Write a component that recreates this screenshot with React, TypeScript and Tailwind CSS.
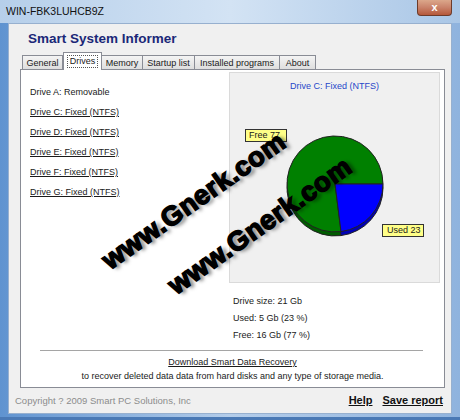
import React from "react";

const font = { fontFamily: '"Liberation Sans", Arial, sans-serif' };

function Pie() {
  const cx = 105;
  const cy = 111;
  const r = 48;
  const ex = 111.0;
  const ey = 158.6;
  const d = 4;
  return (
    <svg width="211" height="211" className="absolute left-0 top-0" viewBox="0 0 211 211">
      <path d={`M${cx},${cy + d} L${ex},${ey + d} A${r},${r} 0 1,1 ${cx + r},${cy + d} Z`} fill="#005c00" stroke="#222" strokeWidth="1" />
      <path d={`M${cx},${cy + d} L${cx + r},${cy + d} A${r},${r} 0 0,1 ${ex},${ey + d} Z`} fill="#0000b4" stroke="#222" strokeWidth="1" />
      <path d={`M${cx},${cy} L${ex},${ey} A${r},${r} 0 1,1 ${cx + r},${cy} Z`} fill="#008000" stroke="#222" strokeWidth="1" />
      <path d={`M${cx},${cy} L${cx + r},${cy} A${r},${r} 0 0,1 ${ex},${ey} Z`} fill="#0000ff" stroke="#222" strokeWidth="1" />
    </svg>
  );
}

function Watermark({ x, y }: { x: number; y: number }) {
  return (
    <div
      className="absolute whitespace-nowrap text-[27px] font-bold leading-none text-black pointer-events-none"
      style={{
        left: x,
        top: y,
        transform: "translate(-50%, -50%) rotate(-35deg)",
        textShadow: "3px 3px 4px rgba(0,0,0,0.5)",
        WebkitTextStroke: "1.5px #000",
        letterSpacing: "0.5px",
        fontFamily: '"Liberation Sans", Arial, sans-serif',
      }}
    >
      www.Gnerk.com
    </div>
  );
}

const tabs = [
  { label: "General", w: "w-[41px]" },
  { label: "Drives", w: "w-[39px]", active: true },
  { label: "Memory", w: "w-[42px]" },
  { label: "Startup list", w: "w-[53px]" },
  { label: "Installed programs", w: "w-[86px]" },
  { label: "About", w: "w-[37px]" },
];

export default function App() {
  return (
    <div
      className="relative w-[460px] h-[420px] overflow-hidden bg-gradient-to-r from-[#5f93d0] via-[#b4cdea] to-[#8fb3de] text-[9px] text-[#1a1a1a] border-b-[3px] border-[#4a79b5]"
      style={font}
    >
      {/* title bar */}
      <div className="h-[23px] flex items-start justify-between bg-gradient-to-r from-[#b6cfea] via-[#d3e3f4] to-[#a9c6e6]">
        <div className="pl-[6px] pt-[5px] text-[10.5px] leading-[12px] text-[#111]">WIN-FBK3LUHCB9Z</div>
        <div className="mr-[8px] w-[35px] h-[16px] rounded-b-[4px] border border-t-0 border-[#6d3b2a] bg-gradient-to-b from-[#dba78b] via-[#c9826a] to-[#b5583a] flex items-center justify-center text-white text-[11px] font-bold leading-none">
          x
        </div>
      </div>

      {/* client area */}
      <div className="mx-[8px] h-[391px] bg-[#f0f0f0] border border-[#97b0cf] flex flex-col">
        <div className="pl-[19px] pt-[7px] h-[28px] text-[13.5px] font-bold leading-[16px] text-[#1b2878]">
          Smart System Informer
        </div>

        {/* tabs */}
        <div className="ml-[13px] flex items-end h-[17px]">
          {tabs.map((t) =>
            t.active ? (
              <div
                key={t.label}
                className={`${t.w} relative z-10 -mb-px h-[18px] bg-white border border-b-0 border-[#898c95] flex items-start justify-center pt-[2px]`}
              >
                <span className="border border-dotted border-[#555] px-[2px] leading-[11px]">{t.label}</span>
              </div>
            ) : (
              <div
                key={t.label}
                className={`${t.w} h-[14px] -ml-px first:ml-0 bg-gradient-to-b from-[#f4f4f4] to-[#dedede] border border-b-0 border-[#898c95] flex items-center justify-center leading-[12px]`}
              >
                {t.label}
              </div>
            )
          )}
        </div>

        {/* panel */}
        <div className="ml-[11px] mr-[6px] h-[319px] bg-white border border-[#898c95] flex flex-col">
          <div className="flex">
            <div className="flex-1 pl-[9px] pt-[16px] flex flex-col gap-[8px] leading-[12px]">
              <div>Drive A: Removable</div>
              <div className="underline">Drive C: Fixed (NTFS)</div>
              <div className="underline">Drive D: Fixed (NTFS)</div>
              <div className="underline">Drive E: Fixed (NTFS)</div>
              <div className="underline">Drive F: Fixed (NTFS)</div>
              <div className="underline">Drive G: Fixed (NTFS)</div>
            </div>
            <div className="w-[211px] mr-[4px] pt-[2px] flex flex-col">
              <div className="relative w-[211px] h-[211px] bg-[#f0f0f0] border border-[#dadada]">
                <Pie />
                <div className="relative pt-[7px] text-center leading-[12px] text-[#2747c9]">Drive C: Fixed (NTFS)</div>
                <div className="absolute left-[15px] top-[56px] w-[42px] h-[13px] bg-[#ffff88] border border-[#333] leading-[11px] pl-[3px]">
                  Free 77
                </div>
                <div className="absolute left-[152px] top-[151px] w-[42px] h-[13px] bg-[#ffff88] border border-[#333] leading-[11px] pl-[4px]">
                  Used 23
                </div>
              </div>
              <div className="pl-[4px] pt-[12px] flex flex-col gap-[5px] leading-[12px]">
                <div>Drive size: 21 Gb</div>
                <div>Used: 5 Gb (23 %)</div>
                <div>Free: 16 Gb (77 %)</div>
              </div>
            </div>
          </div>
          <div className="mt-[9px] ml-[19px] mr-[21px] h-px bg-[#a5a5a5]" />
          <div className="mt-[5px] text-center leading-[12px] underline">Download Smart Data Recovery</div>
          <div className="mt-[2px] text-center leading-[12px]">
            to recover deleted data data from hard disks and any type of storage media.
          </div>
        </div>

        {/* footer */}
        <div className="flex-1 flex items-center justify-between pl-[6px] pr-[8px]">
          <div className="text-[9.5px] text-[#8c8c8c] pt-[2px]">Copyright ? 2009 Smart PC Solutions, Inc</div>
          <div className="flex gap-[10px] text-[11px] font-bold underline text-[#111]">
            <span>Help</span>
            <span>Save report</span>
          </div>
        </div>
      </div>

      <Watermark x={194} y={201} />
      <Watermark x={260} y={226} />
    </div>
  );
}
